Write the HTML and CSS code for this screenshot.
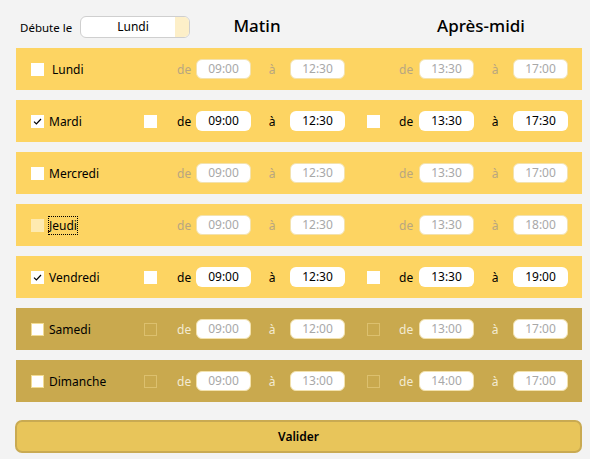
FILE: index.html
```html
<!DOCTYPE html>
<html lang="fr">
<head>
<meta charset="utf-8">
<title>Horaires</title>
<link rel="stylesheet" href="styles.css">
</head>
<body>
<div class="page">
  <div class="header">
    <span class="starts">Débute le</span>
    <div class="select"><span class="select-value">Lundi</span><span class="select-arrow"></span></div>
    <h2 class="title">Matin</h2>
    <span></span>
    <h2 class="title">Après-midi</h2>
  </div>

  <div class="row">
    <span class="cb"></span>
    <span class="day day-shift">Lundi</span>
    <span></span>
    <span class="lbl off">de</span><span class="time off">09:00</span>
    <span class="lbl center off">à</span><span class="time off">12:30</span>
    <span></span>
    <span class="lbl off">de</span><span class="time off">13:30</span>
    <span class="lbl center off">à</span><span class="time off">17:00</span>
  </div>

  <div class="row">
    <span class="cb"><svg viewBox="0 0 13 13" width="13" height="13"><path d="M3 6.6 L5.4 9 L10 4" fill="none" stroke="#000" stroke-width="1.2"/></svg></span>
    <span class="day">Mardi</span>
    <span class="cb"></span>
    <span class="lbl">de</span><span class="time">09:00</span>
    <span class="lbl center">à</span><span class="time">12:30</span>
    <span class="cb cb-pm"></span>
    <span class="lbl">de</span><span class="time">13:30</span>
    <span class="lbl center">à</span><span class="time">17:30</span>
  </div>

  <div class="row">
    <span class="cb"></span>
    <span class="day">Mercredi</span>
    <span></span>
    <span class="lbl off">de</span><span class="time off">09:00</span>
    <span class="lbl center off">à</span><span class="time off">12:30</span>
    <span></span>
    <span class="lbl off">de</span><span class="time off">13:30</span>
    <span class="lbl center off">à</span><span class="time off">17:00</span>
  </div>

  <div class="row">
    <span class="cb cb-pale"></span>
    <span class="day"><span class="focus">Jeudi</span></span>
    <span></span>
    <span class="lbl off">de</span><span class="time off">09:00</span>
    <span class="lbl center off">à</span><span class="time off">12:30</span>
    <span></span>
    <span class="lbl off">de</span><span class="time off">13:30</span>
    <span class="lbl center off">à</span><span class="time off">18:00</span>
  </div>

  <div class="row">
    <span class="cb"><svg viewBox="0 0 13 13" width="13" height="13"><path d="M3 6.6 L5.4 9 L10 4" fill="none" stroke="#000" stroke-width="1.2"/></svg></span>
    <span class="day">Vendredi</span>
    <span class="cb"></span>
    <span class="lbl">de</span><span class="time">09:00</span>
    <span class="lbl center">à</span><span class="time">12:30</span>
    <span class="cb cb-pm"></span>
    <span class="lbl">de</span><span class="time">13:30</span>
    <span class="lbl center">à</span><span class="time">19:00</span>
  </div>

  <div class="row row-weekend">
    <span class="cb cb-we"></span>
    <span class="day">Samedi</span>
    <span class="cb cb-ghost"></span>
    <span class="lbl dim">de</span><span class="time off">09:00</span>
    <span class="lbl center dim">à</span><span class="time off">12:00</span>
    <span class="cb cb-ghost cb-pm"></span>
    <span class="lbl dim">de</span><span class="time off">13:00</span>
    <span class="lbl center dim">à</span><span class="time off">17:00</span>
  </div>

  <div class="row row-weekend">
    <span class="cb cb-we"></span>
    <span class="day">Dimanche</span>
    <span class="cb cb-ghost"></span>
    <span class="lbl dim">de</span><span class="time off">09:00</span>
    <span class="lbl center dim">à</span><span class="time off">13:00</span>
    <span class="cb cb-ghost cb-pm"></span>
    <span class="lbl dim">de</span><span class="time off">14:00</span>
    <span class="lbl center dim">à</span><span class="time off">17:00</span>
  </div>

  <button class="submit" type="button">Valider</button>
</div>
</body>
</html>
```
FILE: styles.css
```css
html, body {
  margin: 0;
  padding: 0;
  background: #f3f3f3;
}
body {
  font-family: "Noto Sans", "Open Sans", sans-serif;
  font-size: 12px;
  color: #000;
}
.page {
  padding: 0 8px 0 16px;
  width: 566px;
}
.header {
  display: grid;
  grid-template-columns: 60px 110px 134px 57px 200px;
  align-items: center;
  height: 48px;
  margin-left: -12px;
  padding: 6px 0 0 16px;
  box-sizing: border-box;
}
.starts {
  font-size: 11.5px;
}
.select {
  display: flex;
  height: 22px;
  box-sizing: border-box;
  border: 1px solid #cfcfcf;
  border-radius: 6px;
  background: #fff;
  overflow: hidden;
}
.select-value {
  flex: 1;
  text-align: center;
  line-height: 20px;
  padding-left: 10px;
}
.select-arrow {
  width: 14px;
  background: #fdefc8;
}
.title {
  margin: 0;
  text-align: center;
  font-size: 17px;
  font-weight: 500;
  line-height: 22px;
  position: relative;
  top: -1px;
}
.row {
  display: grid;
  grid-template-columns: 18px 95px 33px 19px 55px 39px 55px 54px 20px 55px 39px 55px;
  align-items: center;
  height: 42px;
  padding-left: 15px;
  margin-bottom: 10px;
  background: #fdd462;
}
.row-weekend {
  background: #c9a94e;
}
.cb {
  display: block;
  width: 13px;
  height: 13px;
  background: #fff;
  box-sizing: border-box;
}
.cb svg {
  display: block;
}
.cb-pm {
  margin-left: 22px;
}
.cb-pale {
  background: #feeab0;
}
.cb-we {
  border: 1px solid #f2dc94;
  width: 13px;
  height: 13px;
}
.cb-ghost {
  background: transparent;
  border: 1px solid #dcc06e;
}
.day {
  padding-left: 0;
}
.day-shift {
  padding-left: 3px;
}
.focus {
  outline: 1px dotted #000;
}
.lbl {
  font-size: 12px;
}
.lbl.center {
  text-align: center;
  padding-left: 3px;
}
.off {
  color: #b8a680;
}
.dim {
  color: #f3ebd2;
}
.time {
  display: block;
  height: 20px;
  line-height: 20px;
  text-align: center;
  background: #fff;
  border-radius: 6px;
  box-sizing: border-box;
}
.time.off {
  color: #a8a8a8;
  border: 1px solid #f3e2ae;
  line-height: 18px;
}
.submit {
  display: block;
  width: 567px;
  height: 33px;
  margin: 18px 0 0 -1px;
  background: #e8c55a;
  border: 2px solid #c9aa52;
  border-radius: 7px;
  font-family: "Noto Sans", "Open Sans", sans-serif;
  font-size: 12px;
  font-weight: 600;
  color: #000;
}
```
